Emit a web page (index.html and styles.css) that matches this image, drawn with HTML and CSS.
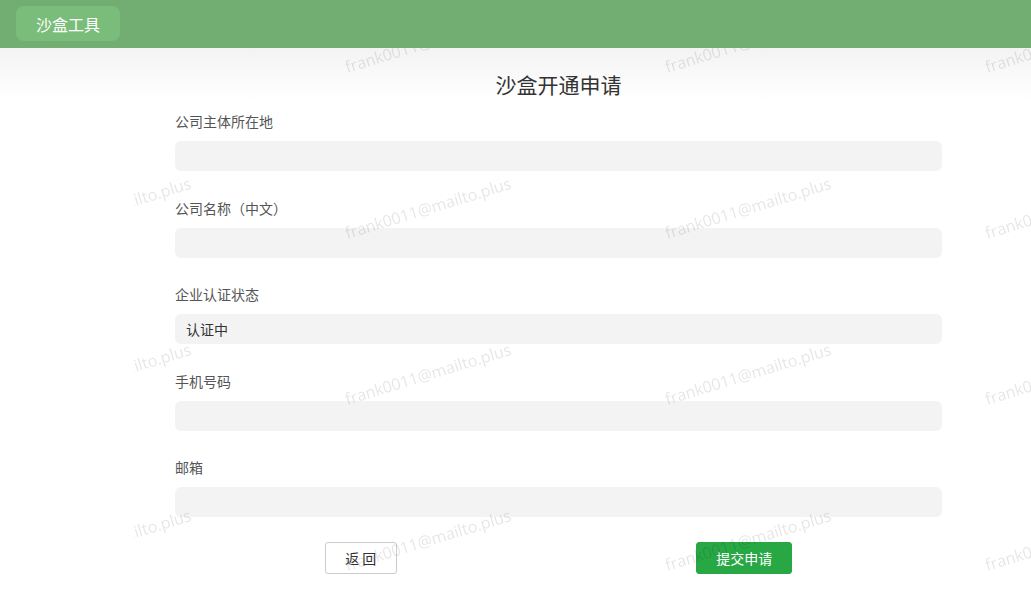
FILE: index.html
```html
<!DOCTYPE html>
<html lang="zh-CN">
<head>
  <meta charset="UTF-8">
  <meta name="viewport" content="width=device-width, initial-scale=1.0">
  <title>沙盒开通申请</title>
  <link rel="stylesheet" href="styles.css">
</head>
<body>
  <header class="topbar">
    <div class="logo">沙盒工具</div>
  </header>

  <main class="page">
    <form class="apply">
      <h1 class="title">沙盒开通申请</h1>

      <div class="field">
        <label>公司主体所在地</label>
        <input class="input" type="text">
      </div>
      <div class="field">
        <label>公司名称（中文）</label>
        <input class="input" type="text">
      </div>
      <div class="field">
        <label>企业认证状态</label>
        <input class="input" type="text" value="认证中" readonly>
      </div>
      <div class="field">
        <label>手机号码</label>
        <input class="input" type="text">
      </div>
      <div class="field">
        <label>邮箱</label>
        <input class="input" type="text">
      </div>

      <div class="actions">
        <div class="slot"><button type="button" class="btn btn-back">返 回</button></div>
        <div class="slot"><button type="button" class="btn btn-submit">提交申请</button></div>
      </div>
    </form>
  </main>

  <div class="watermark">
    <span>frank0011@mailto.plus</span><span>frank0011@mailto.plus</span><span>frank0011@mailto.plus</span><span>frank0011@mailto.plus</span>
    <span>frank0011@mailto.plus</span><span>frank0011@mailto.plus</span><span>frank0011@mailto.plus</span><span>frank0011@mailto.plus</span>
    <span>frank0011@mailto.plus</span><span>frank0011@mailto.plus</span><span>frank0011@mailto.plus</span><span>frank0011@mailto.plus</span>
    <span>frank0011@mailto.plus</span><span>frank0011@mailto.plus</span><span>frank0011@mailto.plus</span><span>frank0011@mailto.plus</span>
  </div>
</body>
</html>
```

FILE: styles.css
```css
body {
  margin: 0;
  font-family: "Noto Sans CJK SC", "Noto Sans", sans-serif;
  color: #333;
  background: #fff;
}
.topbar {
  position: relative;
  z-index: 2;
  height: 48px;
  box-sizing: border-box;
  padding: 6px 16px 0;
  background: #72ae72;
  display: flex;
  align-items: flex-start;
}
.logo {
  width: 104px;
  height: 35px;
  border-radius: 8px;
  background: #7abd7a;
  color: #fff;
  font-size: 16px;
  display: flex;
  align-items: center;
  justify-content: center;
}
.page {
  min-height: 544px;
  background: linear-gradient(#f3f3f3, #fff 52px);
  padding: 22px 0 0 175px;
  box-sizing: border-box;
}
.apply {
  width: 767px;
}
.title {
  margin: 0 0 12px;
  text-align: center;
  font-size: 21px;
  line-height: 29px;
  font-weight: normal;
  color: #333;
}
.field {
  margin-bottom: 26.5px;
}
.field label {
  display: block;
  font-size: 14px;
  line-height: 20px;
  color: #555;
  margin-bottom: 10px;
}
.input {
  display: block;
  width: 100%;
  height: 30px;
  box-sizing: border-box;
  border: none;
  outline: none;
  border-radius: 6px;
  background: #f3f3f3;
  padding: 0 11px;
  font-family: inherit;
  font-size: 14px;
  color: #333;
}
.actions {
  display: flex;
  padding-right: 8px;
  margin-top: -1.5px;
}
.slot {
  flex: 1;
  display: flex;
  justify-content: center;
}
.btn {
  height: 32px;
  border-radius: 3px;
  font-family: inherit;
  font-size: 14px;
  cursor: pointer;
}
.btn-back {
  width: 72px;
  background: #fff;
  border: 1px solid #ccc;
  color: #333;
  margin-right: 8px;
}
.btn-submit {
  width: 96px;
  background: #28a745;
  border: 1px solid #28a745;
  color: #fff;
}
.watermark {
  position: fixed;
  z-index: 1;
  top: -41px;
  left: -52px;
  width: 1280px;
  height: 700px;
  display: grid;
  grid-template-columns: repeat(4, 320px);
  grid-auto-rows: 166px;
  pointer-events: none;
  clip-path: inset(0 0 0 186px);
}
.watermark span {
  display: flex;
  align-items: center;
  justify-content: center;
  transform: rotate(-17deg);
  font-family: "Open Sans", sans-serif;
  font-size: 16px;
  color: rgba(0, 0, 0, 0.1);
  white-space: nowrap;
}
```
